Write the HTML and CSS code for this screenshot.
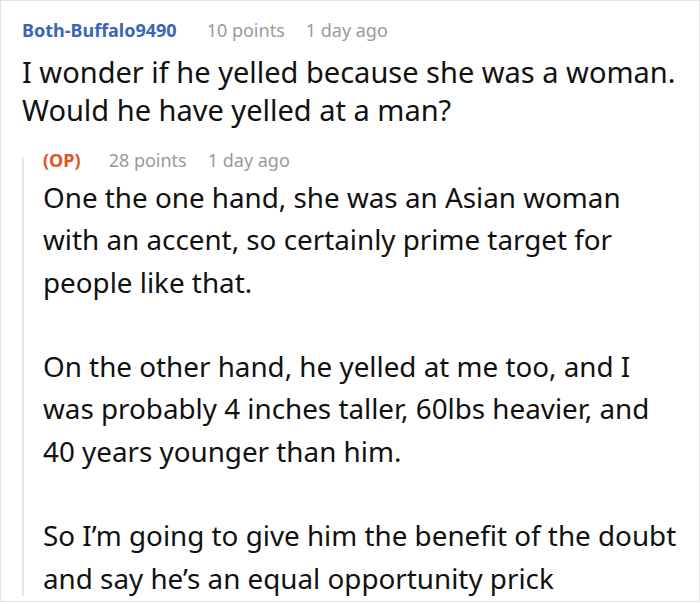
FILE: index.html
```html
<!DOCTYPE html>
<html>
<head>
<meta charset="utf-8">
<link rel="stylesheet" href="styles.css">
</head>
<body>
<div class="frame">
  <div class="comment">
    <div class="meta">
      <span class="user">Both-Buffalo9490</span>
      <span class="stat">10 points</span>
      <span class="stat">1 day ago</span>
    </div>
    <p class="body top">I wonder if he yelled because she was a woman. Would he have yelled at a man?</p>
    <div class="reply">
      <div class="meta">
        <span class="op">(OP)</span>
        <span class="stat">28 points</span>
        <span class="stat">1 day ago</span>
      </div>
      <p class="body">One the one hand, she was an Asian woman with an accent, so certainly prime target for people like that.</p>
      <p class="body">On the other hand, he yelled at me too, and I was probably 4 inches taller, 60lbs heavier, and 40 years younger than him.</p>
      <p class="body last">So I’m going to give him the benefit of the doubt and say he’s an equal opportunity prick</p>
    </div>
  </div>
</div>
</body>
</html>
```
FILE: styles.css
```css
html, body {
  margin: 0;
  padding: 0;
  background: #fff;
}
.frame {
  width: 700px;
  height: 602px;
  box-sizing: border-box;
  border: 1px solid #e2e2e2;
  overflow: hidden;
  font-family: "Noto Sans", "Open Sans", sans-serif;
  color: #111;
}
.comment {
  padding: 17px 0 0 21px;
}
.meta {
  display: flex;
  font-size: 18px;
  line-height: 24px;
}
.meta .stat + .stat {
  margin-left: 21px;
}
.user,
.op {
  font-weight: 700;
  margin-right: 30px;
}
.user {
  color: #3a66b8;
}
.op {
  color: #e0561e;
  margin-right: 28px;
}
.stat {
  color: #9a9a9a;
}
.body {
  margin: 0;
}
.top {
  margin-top: 11px;
  font-size: 29px;
  line-height: 38px;
  padding-right: 8px;
}
.reply {
  position: relative;
  margin-top: 19px;
  padding-left: 21px;
}
.reply::before {
  content: "";
  position: absolute;
  left: 0;
  top: 9px;
  bottom: 3px;
  width: 2px;
  background: #e6e6e6;
}
.reply .meta {
  margin-bottom: 4px;
}
.reply .body {
  font-size: 27.8px;
  line-height: 42.3px;
  margin-bottom: 42.3px;
  padding-right: 21px;
}
.reply .body.last {
  margin-bottom: 0;
}
```
